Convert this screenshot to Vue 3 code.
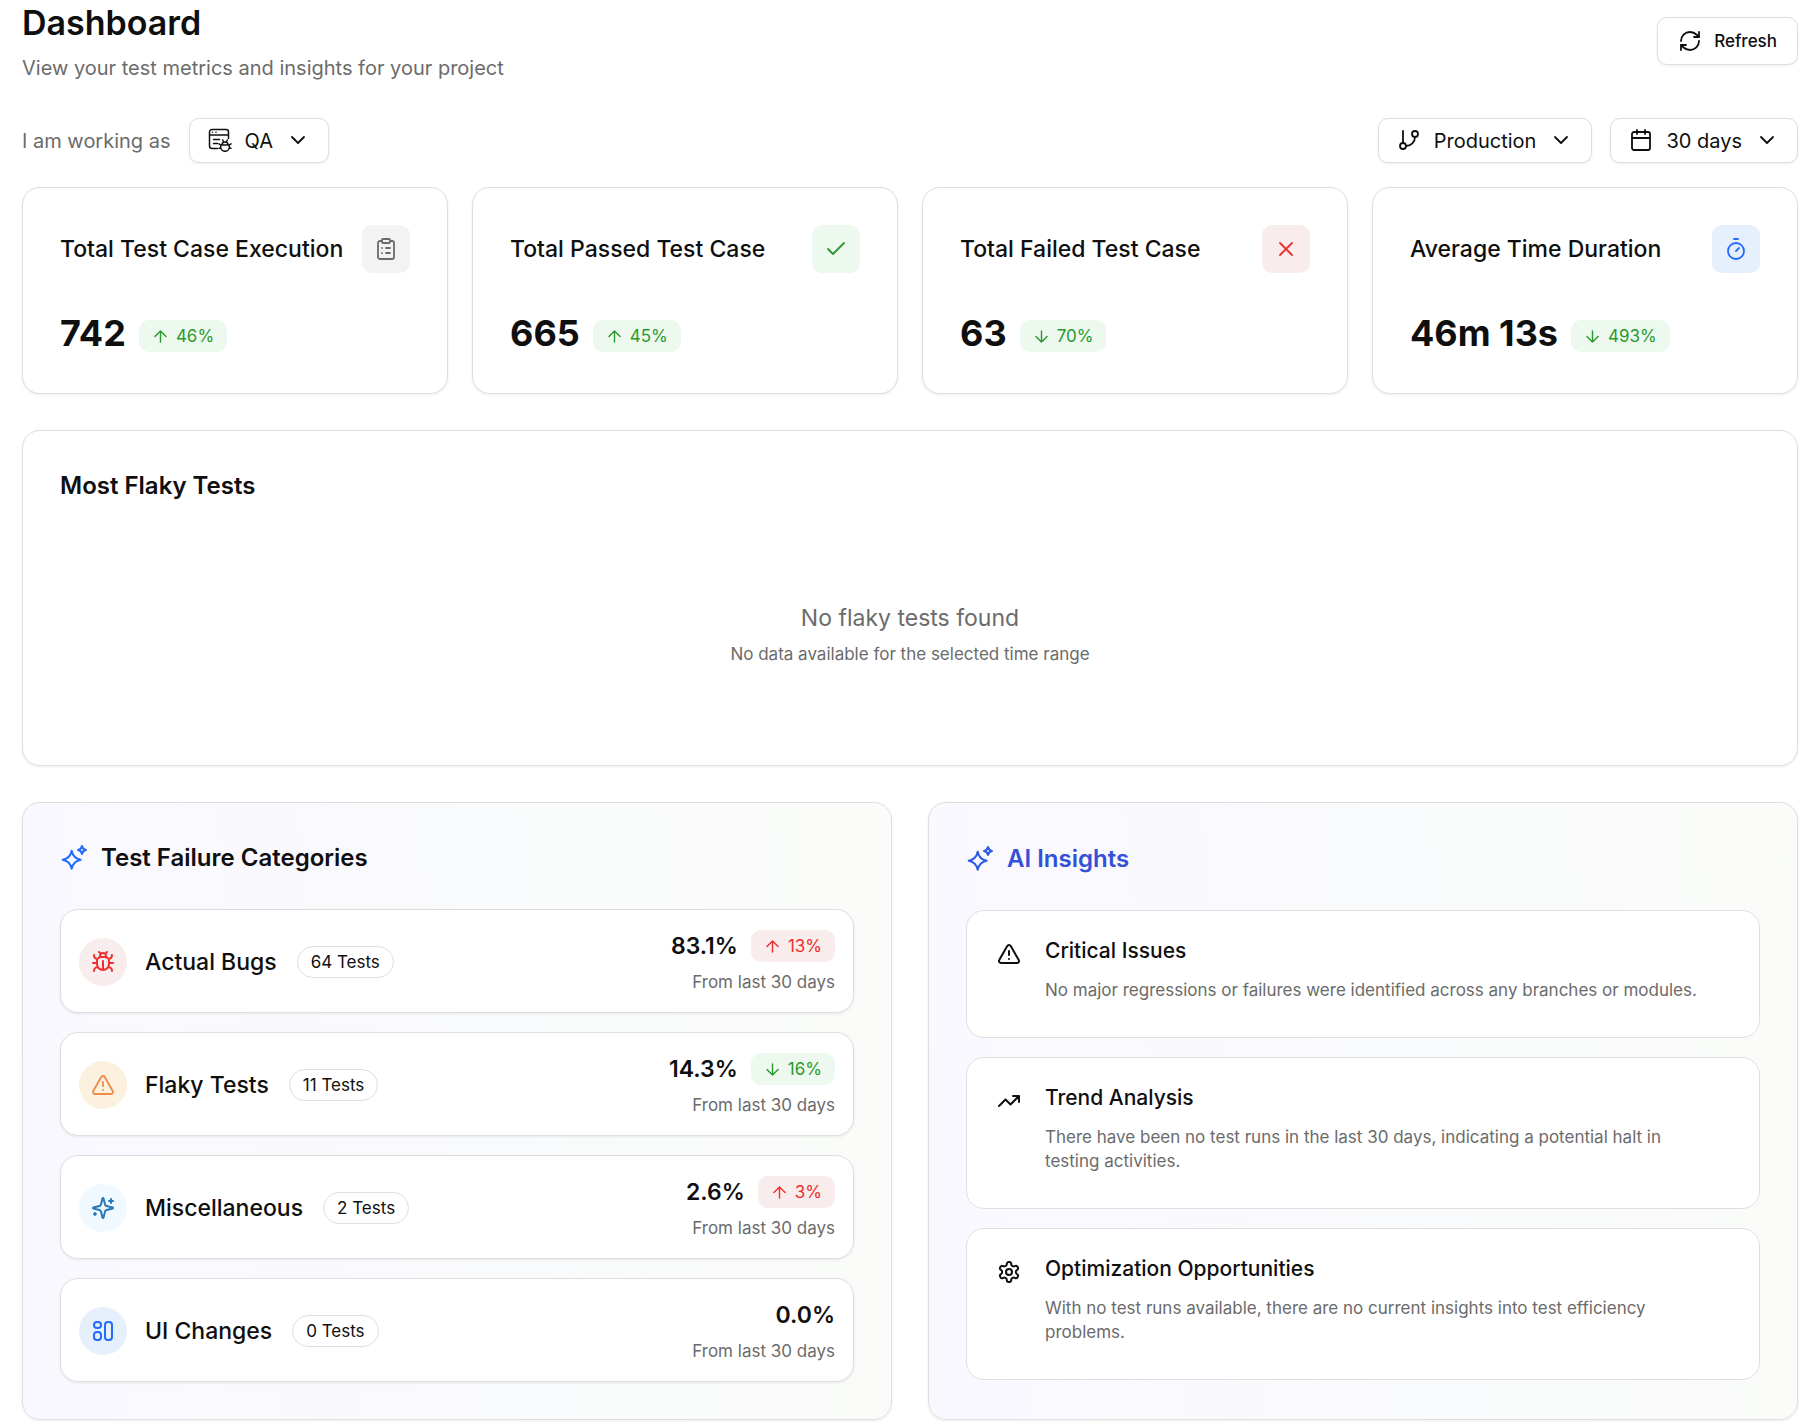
<template>
  <main class="dashboard">
    <header class="page-header">
      <div>
        <h1>Dashboard</h1>
        <p class="subtitle">View your test metrics and insights for your project</p>
      </div>
      <button type="button" class="refresh">
        <Icon name="refresh" />
        Refresh
      </button>
    </header>

    <div class="filters">
      <div class="role">
        <label for="role">I am working as</label>
        <div class="dropdown">
          <Icon name="qa" class="lead" />
          <select id="role" v-model="role">
            <option>QA</option>
            <option>Developer</option>
          </select>
          <Icon name="chevron" class="caret" />
        </div>
      </div>
      <div class="scope">
        <div class="dropdown">
          <Icon name="branch" class="lead" />
          <select v-model="environment" aria-label="Environment">
            <option>Production</option>
            <option>Staging</option>
          </select>
          <Icon name="chevron" class="caret" />
        </div>
        <div class="dropdown">
          <Icon name="calendar" class="lead" />
          <select v-model="range" aria-label="Time range">
            <option>7 days</option>
            <option>30 days</option>
          </select>
          <Icon name="chevron" class="caret" />
        </div>
      </div>
    </div>

    <section class="stats">
      <article class="card stat" v-for="stat in stats" :key="stat.title">
        <div class="stat-head">
          <h2>{{ stat.title }}</h2>
          <span class="tile" :class="stat.tone"><Icon :name="stat.icon" /></span>
        </div>
        <div class="stat-body">
          <strong>{{ stat.value }}</strong>
          <span class="badge green"><Icon :name="stat.trend" />{{ stat.change }}</span>
        </div>
      </article>
    </section>

    <section class="card flaky">
      <h2>Most Flaky Tests</h2>
      <div class="empty">
        <p class="empty-title">No flaky tests found</p>
        <p class="empty-text">No data available for the selected time range</p>
      </div>
    </section>

    <div class="panels">
      <section class="card panel">
        <h2 class="panel-title"><Icon name="stars" box="30" />Test Failure Categories</h2>
        <ul>
          <li class="category" v-for="item in categories" :key="item.name">
            <span class="tile round" :class="item.tone"><Icon :name="item.icon" /></span>
            <h3>{{ item.name }}</h3>
            <span class="pill">{{ item.tests }} Tests</span>
            <div class="share">
              <div class="share-top">
                <strong>{{ item.share }}</strong>
                <span v-if="item.change" class="badge" :class="item.trend === 'up' ? 'red' : 'green'">
                  <Icon :name="item.trend" />{{ item.change }}
                </span>
              </div>
              <p>From last 30 days</p>
            </div>
          </li>
        </ul>
      </section>

      <section class="card panel">
        <h2 class="panel-title ai"><Icon name="stars" box="30" />AI Insights</h2>
        <ul>
          <li class="insight" v-for="item in insights" :key="item.title">
            <Icon :name="item.icon" />
            <div>
              <h3>{{ item.title }}</h3>
              <p>{{ item.text }}</p>
            </div>
          </li>
        </ul>
      </section>
    </div>
  </main>
</template>

<script setup>
import { h, ref } from "vue";

const shapes = {
  refresh:
    '<path d="M3 12a9 9 0 0 1 9-9 9.75 9.75 0 0 1 6.74 2.74L21 8"/><path d="M21 3v5h-5"/><path d="M21 12a9 9 0 0 1-9 9 9.75 9.75 0 0 1-6.74-2.74L3 16"/><path d="M8 16H3v5"/>',
  qa: '<path d="M9.500 20.500H4A2.500 2.500 0 0 1 1.500 18V4A2.500 2.500 0 0 1 4 1.500h14A2.500 2.500 0 0 1 20.500 4v6.500M1.500 7h19M4.500 4.300h.01M8 4.300h.01M5.500 11.500h6M5.500 15.500h4"/><path d="M12.700 17h8.600v2a4.300 4.300 0 0 1-8.600 0zM14 17a3 3 0 0 1 6 0M14.700 12l1 2M19.300 12l-1 2M12.700 17l-1.700-1.200M21.300 17l1.700-1.200M12.700 20.200H11M21.300 20.200H23"/>',
  chevron: '<path d="m6 9 6 6 6-6"/>',
  branch:
    '<path d="M6 3v12"/><circle cx="18" cy="6" r="3"/><circle cx="6" cy="18" r="3"/><path d="M18 9a9 9 0 0 1-9 9"/>',
  calendar: '<path d="M8 2v4M16 2v4M3 10h18"/><rect x="3" y="4" width="18" height="18" rx="2"/>',
  clipboard:
    '<rect x="8" y="2" width="8" height="4" rx="1"/><path d="M16 4h2a2 2 0 0 1 2 2v14a2 2 0 0 1-2 2H6a2 2 0 0 1-2-2V6a2 2 0 0 1 2-2h2M12 11h4M12 16h4M8 11h.01M8 16h.01"/>',
  check: '<path d="M20 6 9 17l-5-5"/>',
  cross: '<path d="M18 6 6 18M6 6l12 12"/>',
  timer: '<path d="M10 2h4M12 14l3-3"/><circle cx="12" cy="14" r="8"/>',
  up: '<path d="m5 12 7-7 7 7M12 19V5"/>',
  down: '<path d="M12 5v14M19 12l-7 7-7-7"/>',
  bug: '<path d="m8 2 1.880 1.880M14.120 3.880 16 2M9 7.130v-1a3.003 3.003 0 1 1 6 0v1"/><path d="M12 20c-3.300 0-6-2.700-6-6v-3a4 4 0 0 1 4-4h4a4 4 0 0 1 4 4v3c0 3.300-2.700 6-6 6M12 20v-9M6.530 9C4.600 8.800 3 7.100 3 5M6 13H2M3 21c0-2.100 1.700-3.900 3.800-4M20.970 5c0 2.100-1.600 3.800-3.500 4M22 13h-4M17.200 17c2.100.1 3.800 1.900 3.800 4"/>',
  alert:
    '<path d="m21.730 18-8-14a2 2 0 0 0-3.480 0l-8 14A2 2 0 0 0 4 21h16a2 2 0 0 0 1.730-3M12 9v4M12 17h.01"/>',
  sparkles:
    '<path d="M9.937 15.500A2 2 0 0 0 8.500 14.063l-6.135-1.582a.5.5 0 0 1 0-.962L8.500 9.936A2 2 0 0 0 9.937 8.500l1.582-6.135a.5.5 0 0 1 .963 0L14.063 8.500A2 2 0 0 0 15.500 9.937l6.135 1.581a.5.5 0 0 1 0 .964L15.500 14.063a2 2 0 0 0-1.437 1.437l-1.582 6.135a.5.5 0 0 1-.963 0zM20 3v4M22 5h-4M4 17v2M5 18H3"/>',
  blocks:
    '<rect x="3" y="3" width="7" height="6" rx="3"/><rect x="3" y="13" width="7" height="8" rx="3"/><rect x="14" y="3" width="7" height="18" rx="3"/>',
  trend: '<path d="M22 7l-8.500 8.500-5-5L2 17M16 7h6v6"/>',
  gear: '<path d="M12.220 2h-.44a2 2 0 0 0-2 2v.18a2 2 0 0 1-1 1.730l-.43.25a2 2 0 0 1-2 0l-.15-.08a2 2 0 0 0-2.730.73l-.22.38a2 2 0 0 0 .73 2.730l.15.1a2 2 0 0 1 1 1.720v.51a2 2 0 0 1-1 1.740l-.15.09a2 2 0 0 0-.73 2.730l.22.38a2 2 0 0 0 2.730.73l.15-.08a2 2 0 0 1 2 0l.43.25a2 2 0 0 1 1 1.730V20a2 2 0 0 0 2 2h.44a2 2 0 0 0 2-2v-.18a2 2 0 0 1 1-1.730l.43-.25a2 2 0 0 1 2 0l.15.08a2 2 0 0 0 2.730-.73l.22-.39a2 2 0 0 0-.73-2.730l-.15-.08a2 2 0 0 1-1-1.740v-.5a2 2 0 0 1 1-1.740l.15-.09a2 2 0 0 0 .73-2.730l-.22-.38a2 2 0 0 0-2.730-.73l-.15.08a2 2 0 0 1-2 0l-.43-.25a2 2 0 0 1-1-1.730V4a2 2 0 0 0-2-2z"/><circle cx="12" cy="12" r="3"/>',
  stars:
    '<path d="M11.700 7.700Q13.200 15.200 20.700 16.700Q13.200 18.200 11.700 25.700Q10.200 18.200 2.700 16.700Q10.200 15.200 11.700 7.700ZM22 3Q22.700 6.300 26 7Q22.700 7.700 22 11Q21.300 7.700 18 7Q21.300 6.300 22 3Z"/>',
};

const Icon = ({ name, box = 24 }) =>
  h("svg", {
    class: ["icon", `icon-${name}`],
    viewBox: `0 0 ${box} ${box}`,
    "aria-hidden": "true",
    innerHTML: shapes[name],
  });
Icon.props = ["name", "box"];

const role = ref("QA");
const environment = ref("Production");
const range = ref("30 days");

const stats = [
  { title: "Total Test Case Execution", value: "742", change: "46%", trend: "up", icon: "clipboard", tone: "gray" },
  { title: "Total Passed Test Case", value: "665", change: "45%", trend: "up", icon: "check", tone: "green" },
  { title: "Total Failed Test Case", value: "63", change: "70%", trend: "down", icon: "cross", tone: "red" },
  { title: "Average Time Duration", value: "46m 13s", change: "493%", trend: "down", icon: "timer", tone: "blue" },
];

const categories = [
  { name: "Actual Bugs", tests: 64, share: "83.1%", change: "13%", trend: "up", icon: "bug", tone: "red" },
  { name: "Flaky Tests", tests: 11, share: "14.3%", change: "16%", trend: "down", icon: "alert", tone: "orange" },
  { name: "Miscellaneous", tests: 2, share: "2.6%", change: "3%", trend: "up", icon: "sparkles", tone: "sky" },
  { name: "UI Changes", tests: 0, share: "0.0%", icon: "blocks", tone: "blue" },
];

const insights = [
  {
    title: "Critical Issues",
    text: "No major regressions or failures were identified across any branches or modules.",
    icon: "alert",
  },
  {
    title: "Trend Analysis",
    text: "There have been no test runs in the last 30 days, indicating a potential halt in testing activities.",
    icon: "trend",
  },
  {
    title: "Optimization Opportunities",
    text: "With no test runs available, there are no current insights into test efficiency problems.",
    icon: "gear",
  },
];
</script>

<style>
body {
  margin: 0;
  background: #ffffff;
}
</style>

<style scoped>
.dashboard {
  padding: 0 18px 8px 22px;
  color: #0f0f10;
  font-family: Inter, "Liberation Sans", sans-serif;
}

.dashboard * {
  box-sizing: border-box;
}

h1,
h2,
h3,
p,
ul {
  margin: 0;
  padding: 0;
}

ul {
  list-style: none;
}

.icon {
  flex: none;
  width: 24px;
  height: 24px;
  fill: none;
  stroke: currentColor;
  stroke-width: 1.8;
  stroke-linecap: round;
  stroke-linejoin: round;
}

.page-header {
  display: flex;
  justify-content: space-between;
  align-items: center;
}

h1 {
  font-size: 34px;
  font-weight: 600;
  line-height: 46px;
}

.subtitle {
  margin-top: 9px;
  font-size: 20px;
  line-height: 26px;
  color: #6b6b6b;
}

.refresh {
  display: flex;
  align-items: center;
  gap: 12px;
  height: 48px;
  padding: 0 20px;
  border: 1px solid #dfdfe0;
  border-radius: 10px;
  background: #ffffff;
  box-shadow: 0 1px 3px rgba(0, 0, 0, 0.07);
  color: inherit;
  font: 500 17px Inter, "Liberation Sans", sans-serif;
}

.filters {
  display: flex;
  flex-wrap: wrap;
  justify-content: space-between;
  gap: 18px;
  margin: 37px 0 24px;
}

.role,
.scope {
  display: flex;
  align-items: center;
  gap: 18px;
}

.role label {
  font-size: 20px;
  color: #6b6b6b;
}

.dropdown {
  position: relative;
}

.dropdown select {
  display: block;
  height: 45px;
  padding: 0 55px;
  border: 1px solid #dfdfe0;
  border-radius: 10px;
  appearance: none;
  field-sizing: content;
  background: #ffffff;
  box-shadow: 0 1px 3px rgba(0, 0, 0, 0.07);
  color: inherit;
  font: 400 20px Inter, "Liberation Sans", sans-serif;
}

.dropdown .icon {
  position: absolute;
  top: 10px;
  pointer-events: none;
}

.dropdown .icon-qa {
  stroke-width: 1.5;
}

.dropdown .lead {
  left: 19px;
}

.dropdown .caret {
  right: 19px;
}

.card {
  border: 1px solid #dfdfe0;
  border-radius: 18px;
  background: #ffffff;
  box-shadow: 0 1px 3px rgba(0, 0, 0, 0.08);
}

.stats {
  display: grid;
  grid-template-columns: repeat(4, minmax(0, 1fr));
  gap: 24px;
}

.stat {
  padding: 37px 37px 36px;
}

.stat-head {
  display: flex;
  justify-content: space-between;
  align-items: center;
}

.stat-head h2 {
  font-size: 23px;
  font-weight: 500;
  line-height: 32px;
}

.tile {
  display: grid;
  flex: none;
  place-items: center;
  width: 48px;
  height: 48px;
  border-radius: 10px;
}

.round {
  border-radius: 50%;
}

.gray {
  background: #f3f3f3;
  color: #6b6b6b;
}

.green {
  background: #edf9ee;
  color: #2a992e;
}

.red {
  background: #f9ecec;
  color: #ee2f2f;
}

.blue {
  background: #e6f0fd;
  color: #246bfd;
}

.orange {
  background: #fcf0df;
  color: #ee8c47;
}

.sky {
  background: #f0f9ff;
  color: #2a78b6;
}

.stat-body {
  display: flex;
  align-items: flex-end;
  gap: 13px;
  margin-top: 36px;
}

.stat-body strong {
  font-size: 36px;
  font-weight: 700;
  line-height: 48px;
}

.stat-body .badge {
  margin-bottom: 5px;
}

.badge {
  display: flex;
  align-items: center;
  gap: 6px;
  height: 32px;
  padding: 0 13px 0 12px;
  border-radius: 10px;
  font-size: 17px;
}

.badge .icon {
  width: 19px;
  height: 19px;
}

.flaky {
  margin: 36px 0;
  padding: 37px 37px 36px;
}

.flaky h2,
.panel-title {
  font-size: 24px;
  font-weight: 600;
  line-height: 36px;
}

.empty {
  display: flex;
  flex-direction: column;
  justify-content: center;
  gap: 6px;
  min-height: 225px;
  padding-top: 35px;
  text-align: center;
  color: #6b6b6b;
}

.empty-title {
  font-size: 23px;
  line-height: 34px;
}

.empty-text {
  font-size: 17px;
  line-height: 26px;
}

.panels {
  display: grid;
  grid-template-columns: repeat(2, minmax(0, 1fr));
  gap: 36px;
}

.panel {
  padding: 37px;
  background: linear-gradient(84deg, #faf8ff, #f9fafc 50%, #fafcf9);
}

.panel-title {
  display: flex;
  align-items: center;
  gap: 11px;
  margin-bottom: 33px;
}

.panel-title .icon {
  width: 30px;
  height: 30px;
  stroke-width: 2;
  color: #246bfd;
}

.ai {
  line-height: 37px;
  color: #3350d6;
}

.ai .icon {
  color: #2a5be2;
}

.panel ul {
  display: grid;
  gap: 19px;
}

.category {
  display: flex;
  align-items: center;
  padding: 20px 18px 18px;
  border: 1px solid #dfdfe0;
  border-radius: 18px;
  background: #ffffff;
  box-shadow: 0 1px 3px rgba(0, 0, 0, 0.08);
}

.category h3 {
  margin: 0 20px 0 18px;
  font-size: 23px;
  font-weight: 500;
}

.category .icon-bug,
.category .icon-sparkles,
.category .icon-blocks {
  stroke-width: 2;
}

.pill {
  padding: 0 13px;
  border: 1px solid #dfdfe0;
  border-radius: 16px;
  font-size: 17px;
  line-height: 30px;
  white-space: nowrap;
}

.share {
  margin-left: auto;
  text-align: right;
}

.share-top {
  display: flex;
  justify-content: flex-end;
  align-items: center;
  gap: 13px;
  height: 32px;
}

.share strong {
  font-size: 23px;
  font-weight: 600;
}

.share p {
  margin-top: 8px;
  font-size: 17px;
  line-height: 24px;
  color: #6b6b6b;
}

.insight {
  display: flex;
  gap: 24px;
  padding: 25px 48px 35px 30px;
  border: 1px solid #dfdfe0;
  border-radius: 18px;
  background: #ffffff;
}

.insight .icon {
  margin-top: 6px;
  stroke-width: 2;
}

.insight h3 {
  font-size: 21px;
  font-weight: 500;
  line-height: 30px;
}

.insight p {
  margin-top: 12px;
  font-size: 17px;
  line-height: 24px;
  color: #6b6b6b;
}

@media (max-width: 1500px) {
  .stats {
    grid-template-columns: repeat(2, minmax(0, 1fr));
  }
}

@media (max-width: 1200px) {
  .panels {
    grid-template-columns: minmax(0, 1fr);
  }
}
</style>
